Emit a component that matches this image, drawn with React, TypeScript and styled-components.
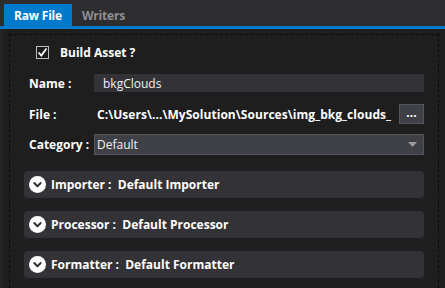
import React from "react";
import styled, { createGlobalStyle } from "styled-components";

const Global = createGlobalStyle`
  html, body { margin: 0; padding: 0; background: #1e1e1e; }
  body { font-family: "Open Sans", "Noto Sans", sans-serif; font-size: 12px; color: #fff; }
  * { box-sizing: border-box; }
`;

const Page = styled.div`
  width: 445px;
  height: 288px;
  display: flex;
  flex-direction: column;
  overflow: hidden;
  background: #1e1e1e;
`;

const TabBar = styled.div`
  height: 29px;
  flex: none;
  display: flex;
  align-items: flex-end;
  padding-left: 4px;
  background: #2d2d30;
  border-bottom: 3px solid #007acc;
`;

const Tab = styled.div<{ $active?: boolean }>`
  height: 22px;
  padding: 0 10px;
  display: flex;
  align-items: center;
  font-weight: 700;
  font-size: 12px;
  letter-spacing: -0.2px;
  background: ${(p) => (p.$active ? "#007acc" : "transparent")};
  color: ${(p) => (p.$active ? "#ffffff" : "#8f8f94")};
`;

const Body = styled.div`
  flex: 1;
  display: flex;
  padding: 5px 6px 0 6px;
  border-left: 3px solid #252527;
  background: #1e1e1e;
`;

const Panel = styled.div`
  flex: 1;
  border: 1px dashed #0a0a0a;
  border-bottom: none;
  padding: 11px 14px 0 14px;
  display: flex;
  flex-direction: column;
`;

const CheckRow = styled.label`
  display: flex;
  align-items: center;
  height: 13px;
  margin-left: 12px;
  gap: 11px;
  font-weight: 700;
`;

const CheckBox = styled.span`
  width: 13px;
  height: 13px;
  border: 1px solid #bdbdbd;
  background: #1b1b1b;
  display: flex;
  align-items: center;
  justify-content: center;
`;

const FieldRow = styled.div<{ $top: number; $h: number }>`
  display: flex;
  align-items: center;
  margin-top: ${(p) => p.$top}px;
  height: ${(p) => p.$h}px;
  padding-left: 5px;
`;

const Label = styled.div`
  width: 65px;
  flex: none;
  font-weight: 700;
  white-space: nowrap;
`;

const TextBox = styled.div`
  flex: 1;
  height: 100%;
  background: #333337;
  display: flex;
  align-items: center;
  padding-left: 9px;
  color: #f1f1f1;
`;

const PathText = styled.div`
  flex: 1;
  min-width: 0;
  overflow: hidden;
  white-space: nowrap;
  padding-left: 3px;
  font-weight: 700;
  letter-spacing: 0.05px;
`;

const BrowseButton = styled.div`
  width: 25px;
  height: 100%;
  flex: none;
  margin-left: 4px;
  background: #3f3f46;
  border: 1px solid #55555c;
  display: flex;
  align-items: center;
  justify-content: center;
  font-weight: 700;
  padding-bottom: 3px;
`;

const Select = styled.div`
  flex: 1;
  height: 100%;
  background: #3f3f46;
  border: 1px solid #55555c;
  display: flex;
  align-items: center;
  justify-content: space-between;
  padding: 0 6px 0 2px;
  color: #f1f1f1;
`;

const Expander = styled.div<{ $top: number }>`
  margin-top: ${(p) => p.$top}px;
  height: 27px;
  border-radius: 4px;
  background: #333337;
  display: flex;
  align-items: center;
  padding-left: 5px;
  gap: 5px;
  font-weight: 700;
  white-space: pre;
`;

const Chevron = () => (
  <svg width="17" height="17" viewBox="0 0 17 17">
    <circle cx="8.5" cy="8.5" r="8.5" fill="#ffffff" />
    <path d="M5.3 7 L8.5 10.2 L11.7 7" stroke="#333337" strokeWidth="2" fill="none" strokeLinecap="round" strokeLinejoin="round" />
  </svg>
);

export default function App() {
  return (
    <Page>
      <Global />
      <TabBar>
        <Tab $active>Raw File</Tab>
        <Tab>Writers</Tab>
      </TabBar>
      <Body>
        <Panel>
          <CheckRow>
            <CheckBox>
              <svg width="11" height="11" viewBox="0 0 11 11">
                <path d="M1.5 5.5 L4.3 8.5 L9.5 1.5" stroke="#fff" strokeWidth="1.8" fill="none" />
              </svg>
            </CheckBox>
            Build Asset ?
          </CheckRow>
          <FieldRow $top={15} $h={18}>
            <Label>Name :</Label>
            <TextBox>bkgClouds</TextBox>
          </FieldRow>
          <FieldRow $top={12} $h={20}>
            <Label>File :</Label>
            <PathText>C:\Users\...\MySolution\Sources\img_bkg_clouds_</PathText>
            <BrowseButton>...</BrowseButton>
          </FieldRow>
          <FieldRow $top={10} $h={21}>
            <Label>Category :</Label>
            <Select>
              <span>Default</span>
              <svg width="9" height="5" viewBox="0 0 9 5">
                <path d="M0 0 H9 L4.5 5 Z" fill="#9a9a9a" />
              </svg>
            </Select>
          </FieldRow>
          <Expander $top={16}>
            <Chevron />
            {"Importer :  Default Importer"}
          </Expander>
          <Expander $top={13}>
            <Chevron />
            {"Processor :  Default Processor"}
          </Expander>
          <Expander $top={13}>
            <Chevron />
            {"Formatter :  Default Formatter"}
          </Expander>
        </Panel>
      </Body>
    </Page>
  );
}
